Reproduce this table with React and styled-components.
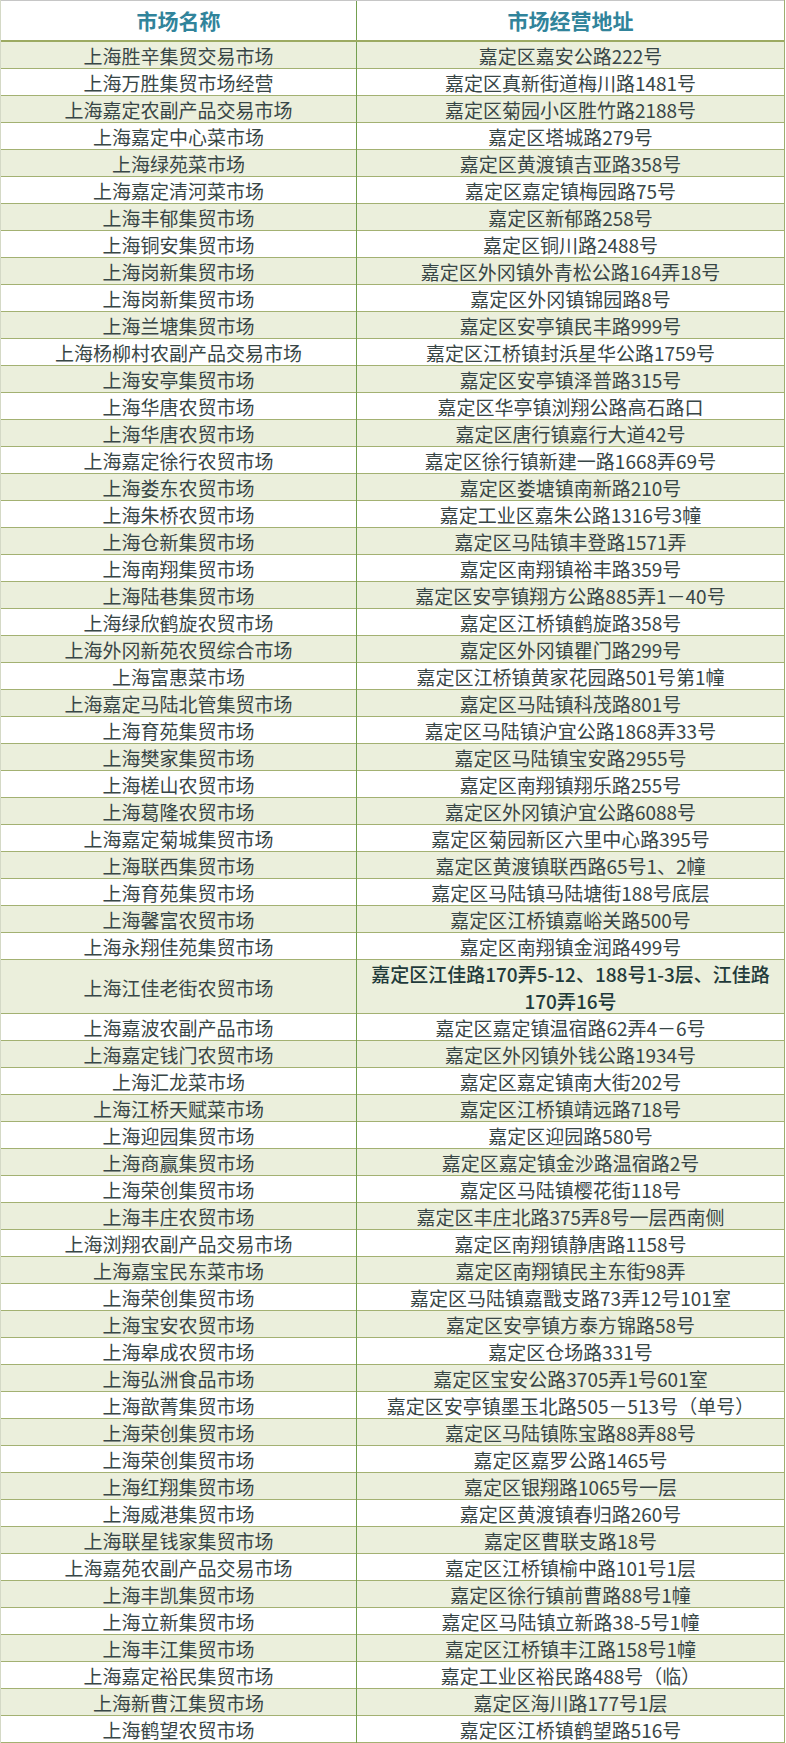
import React from "react";
import styled, { createGlobalStyle } from "styled-components";

const GlobalStyle = createGlobalStyle`
  * { box-sizing: border-box; }
  html, body { margin: 0; padding: 0; background: #ffffff; }
  body {
    font-family: "Noto Sans CJK SC", "Noto Sans", sans-serif;
  }
`;

const rows = [
  ["上海胜辛集贸交易市场", "嘉定区嘉安公路222号"],
  ["上海万胜集贸市场经营", "嘉定区真新街道梅川路1481号"],
  ["上海嘉定农副产品交易市场", "嘉定区菊园小区胜竹路2188号"],
  ["上海嘉定中心菜市场", "嘉定区塔城路279号"],
  ["上海绿苑菜市场", "嘉定区黄渡镇吉亚路358号"],
  ["上海嘉定清河菜市场", "嘉定区嘉定镇梅园路75号"],
  ["上海丰郁集贸市场", "嘉定区新郁路258号"],
  ["上海铜安集贸市场", "嘉定区铜川路2488号"],
  ["上海岗新集贸市场", "嘉定区外冈镇外青松公路164弄18号"],
  ["上海岗新集贸市场", "嘉定区外冈镇锦园路8号"],
  ["上海兰塘集贸市场", "嘉定区安亭镇民丰路999号"],
  ["上海杨柳村农副产品交易市场", "嘉定区江桥镇封浜星华公路1759号"],
  ["上海安亭集贸市场", "嘉定区安亭镇泽普路315号"],
  ["上海华唐农贸市场", "嘉定区华亭镇浏翔公路高石路口"],
  ["上海华唐农贸市场", "嘉定区唐行镇嘉行大道42号"],
  ["上海嘉定徐行农贸市场", "嘉定区徐行镇新建一路1668弄69号"],
  ["上海娄东农贸市场", "嘉定区娄塘镇南新路210号"],
  ["上海朱桥农贸市场", "嘉定工业区嘉朱公路1316号3幢"],
  ["上海仓新集贸市场", "嘉定区马陆镇丰登路1571弄"],
  ["上海南翔集贸市场", "嘉定区南翔镇裕丰路359号"],
  ["上海陆巷集贸市场", "嘉定区安亭镇翔方公路885弄1－40号"],
  ["上海绿欣鹤旋农贸市场", "嘉定区江桥镇鹤旋路358号"],
  ["上海外冈新苑农贸综合市场", "嘉定区外冈镇瞿门路299号"],
  ["上海富惠菜市场", "嘉定区江桥镇黄家花园路501号第1幢"],
  ["上海嘉定马陆北管集贸市场", "嘉定区马陆镇科茂路801号"],
  ["上海育苑集贸市场", "嘉定区马陆镇沪宜公路1868弄33号"],
  ["上海樊家集贸市场", "嘉定区马陆镇宝安路2955号"],
  ["上海槎山农贸市场", "嘉定区南翔镇翔乐路255号"],
  ["上海葛隆农贸市场", "嘉定区外冈镇沪宜公路6088号"],
  ["上海嘉定菊城集贸市场", "嘉定区菊园新区六里中心路395号"],
  ["上海联西集贸市场", "嘉定区黄渡镇联西路65号1、2幢"],
  ["上海育苑集贸市场", "嘉定区马陆镇马陆塘街188号底层"],
  ["上海馨富农贸市场", "嘉定区江桥镇嘉峪关路500号"],
  ["上海永翔佳苑集贸市场", "嘉定区南翔镇金润路499号"],
  ["上海江佳老街农贸市场", "嘉定区江佳路170弄5-12、188号1-3层、江佳路170弄16号", true],
  ["上海嘉波农副产品市场", "嘉定区嘉定镇温宿路62弄4－6号"],
  ["上海嘉定钱门农贸市场", "嘉定区外冈镇外钱公路1934号"],
  ["上海汇龙菜市场", "嘉定区嘉定镇南大街202号"],
  ["上海江桥天赋菜市场", "嘉定区江桥镇靖远路718号"],
  ["上海迎园集贸市场", "嘉定区迎园路580号"],
  ["上海商赢集贸市场", "嘉定区嘉定镇金沙路温宿路2号"],
  ["上海荣创集贸市场", "嘉定区马陆镇樱花街118号"],
  ["上海丰庄农贸市场", "嘉定区丰庄北路375弄8号一层西南侧"],
  ["上海浏翔农副产品交易市场", "嘉定区南翔镇静唐路1158号"],
  ["上海嘉宝民东菜市场", "嘉定区南翔镇民主东街98弄"],
  ["上海荣创集贸市场", "嘉定区马陆镇嘉戬支路73弄12号101室"],
  ["上海宝安农贸市场", "嘉定区安亭镇方泰方锦路58号"],
  ["上海皋成农贸市场", "嘉定区仓场路331号"],
  ["上海弘洲食品市场", "嘉定区宝安公路3705弄1号601室"],
  ["上海歆菁集贸市场", "嘉定区安亭镇墨玉北路505－513号（单号）"],
  ["上海荣创集贸市场", "嘉定区马陆镇陈宝路88弄88号"],
  ["上海荣创集贸市场", "嘉定区嘉罗公路1465号"],
  ["上海红翔集贸市场", "嘉定区银翔路1065号一层"],
  ["上海威港集贸市场", "嘉定区黄渡镇春归路260号"],
  ["上海联星钱家集贸市场", "嘉定区曹联支路18号"],
  ["上海嘉苑农副产品交易市场", "嘉定区江桥镇榆中路101号1层"],
  ["上海丰凯集贸市场", "嘉定区徐行镇前曹路88号1幢"],
  ["上海立新集贸市场", "嘉定区马陆镇立新路38-5号1幢"],
  ["上海丰江集贸市场", "嘉定区江桥镇丰江路158号1幢"],
  ["上海嘉定裕民集贸市场", "嘉定工业区裕民路488号（临）"],
  ["上海新曹江集贸市场", "嘉定区海川路177号1层"],
  ["上海鹤望农贸市场", "嘉定区江桥镇鹤望路516号"],
];

const Table = styled.div`
  width: 785px;
  border-left: 1px solid #d4d9c6;
  border-right: 1px solid #9fae70;
  background: #ffffff;
`;

const HeaderRow = styled.div`
  display: grid;
  grid-template-columns: 356px 1fr;
  height: 42px;
  border-top: 1px solid #c6c6c6;
  border-bottom: 2px solid #9caa62;
`;

const HeaderCell = styled.div`
  display: flex;
  align-items: center;
  justify-content: center;
  padding-bottom: 1px;
  font-size: 21px;
  font-weight: 700;
  color: #31849b;
  border-right: ${(p) => (p.$first ? "1px solid #74a050" : "none")};
`;

const Row = styled.div`
  display: grid;
  grid-template-columns: 356px 1fr;
  height: ${(p) => (p.$tall ? 54 : 27)}px;
  background: ${(p) => (p.$shaded ? "#ebefdc" : "#ffffff")};
  border-bottom: 1px solid #a3b172;
`;

const Cell = styled.div`
  display: flex;
  align-items: center;
  justify-content: center;
  text-align: center;
  padding: 0 6px;
  font-size: 19px;
  line-height: 27px;
  color: ${(p) => (p.$strong ? "#1f3a3a" : "#384646")};
  font-weight: ${(p) => (p.$strong ? 500 : 400)};
  white-space: ${(p) => (p.$wrap ? "normal" : "nowrap")};
  border-right: ${(p) => (p.$first ? "1px solid #74a050" : "none")};
`;

export default function App() {
  return (
    <>
      <GlobalStyle />
      <Table>
        <HeaderRow>
          <HeaderCell $first>市场名称</HeaderCell>
          <HeaderCell>市场经营地址</HeaderCell>
        </HeaderRow>
        {rows.map(([name, addr, tall], i) => (
          <Row key={i} $shaded={i % 2 === 0} $tall={!!tall}>
            <Cell $first>{name}</Cell>
            <Cell $wrap={!!tall} $strong={!!tall}>
              {addr}
            </Cell>
          </Row>
        ))}
      </Table>
    </>
  );
}
